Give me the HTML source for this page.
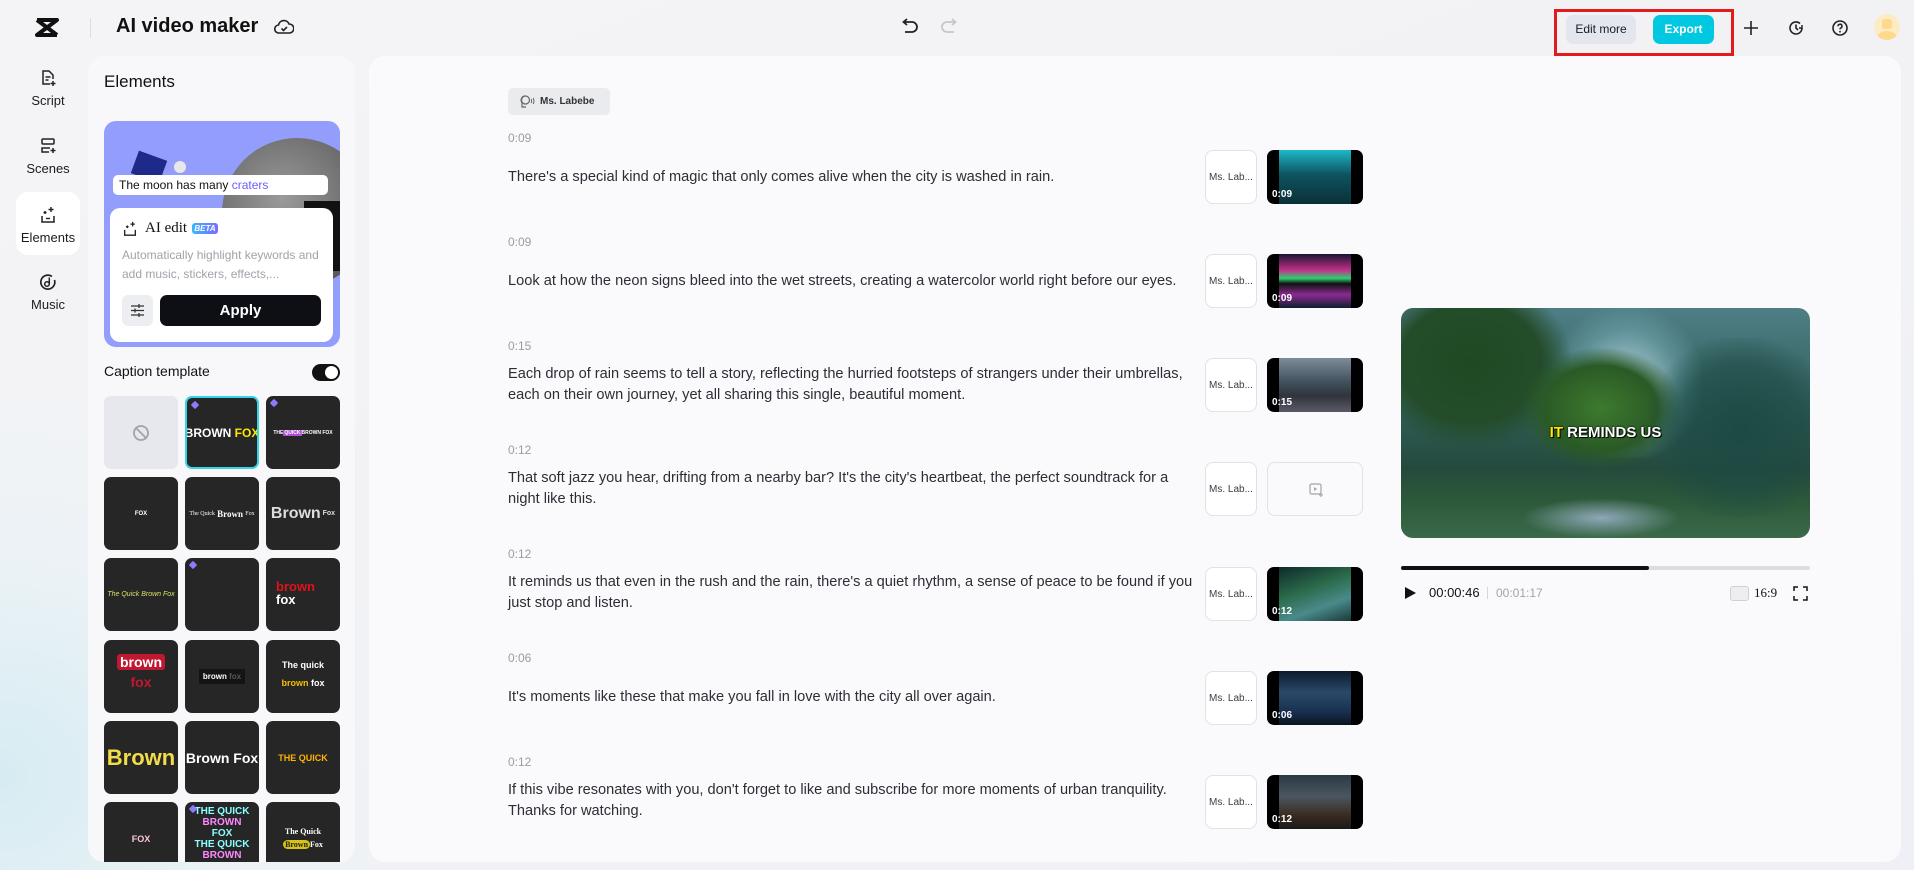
<!DOCTYPE html>
<html><head><meta charset="utf-8"><style>
*{box-sizing:border-box;margin:0;padding:0}
body{width:1914px;height:870px;overflow:hidden;font-family:"Liberation Sans",sans-serif;color:#1a1c22;background:linear-gradient(160deg,#f4f4f6 0%,#f2f2f5 50%,#eef0f6 100%);position:relative}
.bgtint{position:absolute;left:0;top:400px;width:400px;height:470px;background:radial-gradient(ellipse at 0% 80%,#d6ecf2 0%,rgba(230,242,246,0.6) 40%,rgba(244,244,246,0) 75%)}
.abs{position:absolute}
.nav{position:absolute;left:16px;width:64px;text-align:center;font-size:13px;color:#1a1c22}
.nav svg{display:block;margin:0 auto 6px}
.panel{position:absolute;left:88px;top:56px;width:267px;height:806px;background:#f8f8fb;border-radius:16px;overflow:hidden}
.main{position:absolute;left:369px;top:56px;width:1532px;height:806px;background:#fafafc;border-radius:16px}
.ts{position:absolute;left:508px;font-size:12px;color:#9a9ca4}
.tx{position:absolute;left:508px;width:692px;font-size:14.6px;line-height:21px;color:#2b2e36}
.vb{position:absolute;left:1205px;width:52px;height:54px;border:1px solid #dfe2e6;border-radius:8px;background:#fff;font-size:10px;color:#3a3d45;display:flex;align-items:center;justify-content:center}
.th{position:absolute;left:1267px;width:96px;height:54px;border-radius:7px;background:#000;overflow:hidden}
.th .im{position:absolute;left:12px;right:12px;top:0;bottom:0}
.th span{position:absolute;left:5px;bottom:4px;color:#fff;font-size:10px;font-weight:bold}
.cell{position:absolute;width:74px;height:73px;background:#262626;border-radius:7px;overflow:hidden;display:flex;align-items:center;justify-content:center;color:#fff;font-weight:bold;text-align:center}
.gem{position:absolute;left:5px;top:4px;width:6px;height:6px;background:#8a7cff;transform:rotate(45deg);border-radius:1px}
</style></head><body>
<div class="bgtint"></div>

<svg class="abs" style="left:35px;top:17px" width="24" height="21" viewBox="0 0 24 21"><path d="M2 3h20L2 18h20" fill="none" stroke="#111" stroke-width="4" stroke-linejoin="round"/><path d="M2 3l20 15" stroke="#111" stroke-width="4"/></svg>
<div class="abs" style="left:90px;top:18px;width:1px;height:20px;background:#dcdde2"></div>
<div class="abs" style="left:116px;top:15px;font-size:20px;font-weight:bold;color:#111">AI video maker</div>
<svg class="abs" style="left:274px;top:17px" width="20" height="20" viewBox="0 0 20 20"><path d="M5 16a4 4 0 0 1-.5-8A5.5 5.5 0 0 1 15 7a4.5 4.5 0 0 1 .5 9z" fill="none" stroke="#222" stroke-width="1.6"/><path d="M7.5 11.5l2 2 3.5-3.5" fill="none" stroke="#222" stroke-width="1.6"/></svg>
<svg class="abs" style="left:899px;top:18px" width="20" height="18" viewBox="0 0 20 18"><path d="M5 4h8a5 5 0 0 1 0 10H6" fill="none" stroke="#222" stroke-width="1.8"/><path d="M8 1L4.5 4 8 7" fill="none" stroke="#222" stroke-width="1.8"/></svg>
<svg class="abs" style="left:940px;top:18px" width="20" height="18" viewBox="0 0 20 18"><path d="M15 4H7a5 5 0 0 0 0 10h7" fill="none" stroke="#c4c6cc" stroke-width="1.8"/><path d="M12 1l3.5 3L12 7" fill="none" stroke="#c4c6cc" stroke-width="1.8"/></svg>

<div class="abs" style="left:1554px;top:9px;width:180px;height:47px;border:3px solid #e21c1c"></div>
<div class="abs" style="left:1566px;top:15px;width:70px;height:29px;border-radius:7px;background:#e3e6ed;font-size:12px;color:#1a1c22;text-align:center;line-height:29px">Edit more</div>
<div class="abs" style="left:1653px;top:15px;width:61px;height:29px;border-radius:7px;background:#00c8e0;font-size:12px;font-weight:bold;color:#fff;text-align:center;line-height:29px">Export</div>
<svg class="abs" style="left:1743px;top:20px" width="16" height="16"><path d="M8 1v14M1 8h14" stroke="#222" stroke-width="1.6"/></svg>
<svg class="abs" style="left:1787px;top:19px" width="18" height="18" viewBox="0 0 18 18"><path d="M15 9a6 6 0 1 1-2-4.5" fill="none" stroke="#222" stroke-width="1.6"/><path d="M9 5.5V9l2 2" fill="none" stroke="#222" stroke-width="1.6"/><path d="M15 6v3h-3" fill="none" stroke="#222" stroke-width="1.4"/></svg>
<svg class="abs" style="left:1831px;top:19px" width="18" height="18" viewBox="0 0 18 18"><circle cx="9" cy="9" r="7" fill="none" stroke="#222" stroke-width="1.6"/><path d="M7 7.2a2 2 0 1 1 2.6 1.9c-.5.2-.6.6-.6 1.3" fill="none" stroke="#222" stroke-width="1.5"/><circle cx="9" cy="12.7" r=".9" fill="#222"/></svg>
<div class="abs" style="left:1874px;top:14px;width:26px;height:26px;border-radius:50%;background:#fdebc4;overflow:hidden"><div style="position:absolute;left:8px;top:5px;width:10px;height:10px;background:#fcd98c;border-radius:3px"></div><div style="position:absolute;left:3px;top:17px;width:20px;height:14px;background:#fcd98c;border-radius:50%"></div></div>

<div class="abs" style="left:16px;top:192px;width:64px;height:63px;background:#fff;border-radius:12px"></div>
<div class="nav" style="top:69px"><svg width="18" height="18" viewBox="0 0 18 18"><path d="M11 15H4V2h6l4 4v4" fill="none" stroke="#222" stroke-width="1.5"/><path d="M6.5 8h5M6.5 11h3" stroke="#222" stroke-width="1.4"/><path d="M14 12v5M11.5 14.5h5" stroke="#222" stroke-width="1.5"/></svg>Script</div>
<div class="nav" style="top:137px"><svg width="18" height="18" viewBox="0 0 18 18"><rect x="3" y="2" width="12" height="5" rx="1" fill="none" stroke="#222" stroke-width="1.5"/><path d="M11 11H3v4h7" fill="none" stroke="#222" stroke-width="1.5"/><path d="M14 11v5M11.5 13.5h5" stroke="#222" stroke-width="1.5"/></svg>Scenes</div>
<div class="nav" style="top:206px"><svg width="18" height="18" viewBox="0 0 18 18"><path d="M3 10v6h12v-6" fill="none" stroke="#222" stroke-width="1.5"/><path d="M12 1v5M9.5 3.5h5M6 5v3M4.5 6.5h3" stroke="#222" stroke-width="1.4"/><path d="M7 12.5h4" stroke="#222" stroke-width="1.4"/></svg>Elements</div>
<div class="nav" style="top:273px"><svg width="18" height="18" viewBox="0 0 18 18"><path d="M13 3.5A7 7 0 1 0 15.5 7" fill="none" stroke="#222" stroke-width="1.7"/><circle cx="8" cy="11" r="2.3" fill="none" stroke="#222" stroke-width="1.5"/><path d="M10.3 11V4.5" stroke="#222" stroke-width="1.5"/></svg>Music</div>

<div class="panel">
 <div class="abs" style="left:16px;top:16px;font-size:17px;color:#111">Elements</div>
 <div class="abs" style="left:16px;top:84px;width:236px;height:1px;background:#e2e3e8"></div>
 <div class="abs" style="left:16px;top:65px;width:236px;height:226px;background:#939dfc;border-radius:12px;overflow:hidden">
  <div class="abs" style="left:118px;top:17px;width:150px;height:150px;border-radius:50%;background:radial-gradient(circle at 40% 40%,#9a9a9a,#6a6a6a 60%,#3a3a3a)"></div>
  <div class="abs" style="left:200px;top:80px;width:40px;height:70px;background:#111"></div>
  <div class="abs" style="left:30px;top:34px;width:30px;height:24px;background:#1d2a8a;transform:rotate(20deg)"></div>
  <div class="abs" style="left:70px;top:40px;width:12px;height:12px;border-radius:50%;background:#e8e8e8"></div>
  <div class="abs" style="left:9px;top:54px;width:215px;height:20px;background:#fff;border-radius:5px;font-size:12px;line-height:20px;padding-left:6px;color:#111">The moon has many <span style="color:#6a5cff">craters</span></div>
  <div class="abs" style="left:6px;top:87px;width:223px;height:134px;background:#fff;border-radius:10px">
   <svg class="abs" style="left:12px;top:13px" width="16" height="16" viewBox="0 0 18 18"><path d="M3 10v6h12v-6" fill="none" stroke="#222" stroke-width="1.5"/><path d="M12 1v5M9.5 3.5h5M6 5v3M4.5 6.5h3" stroke="#222" stroke-width="1.4"/></svg>
   <div class="abs" style="left:35px;top:12px;font-family:'Liberation Serif',serif;font-size:15px;color:#111">AI edit</div>
   <div class="abs" style="left:82px;top:15px;width:26px;height:11px;border-radius:3px;background:linear-gradient(90deg,#3bb6ff,#7a6bff);color:#fff;font-size:8px;font-style:italic;font-weight:bold;text-align:center;line-height:11px">BETA</div>
   <div class="abs" style="left:12px;top:38px;font-size:12px;line-height:19px;color:#a0a3aa;width:200px">Automatically highlight keywords and add music, stickers, effects,...</div>
   <div class="abs" style="left:12px;top:87px;width:31px;height:31px;background:#eceef1;border-radius:6px"><svg style="position:absolute;left:8px;top:8px" width="15" height="15" viewBox="0 0 15 15"><path d="M1 3h13M1 7.5h13M1 12h13" stroke="#333" stroke-width="1.3"/><path d="M9 1v4M5 5.5v4M9 10v4" stroke="#333" stroke-width="1.3"/></svg></div>
   <div class="abs" style="left:50px;top:87px;width:161px;height:31px;background:#0d0f14;border-radius:7px;color:#fff;font-size:15px;font-weight:bold;text-align:center;line-height:31px">Apply</div>
  </div>
 </div>
 <div class="abs" style="left:16px;top:307px;font-size:14px;color:#111">Caption template</div>
 <div class="abs" style="left:224px;top:308px;width:28px;height:17px;border-radius:9px;background:#111"><div style="position:absolute;right:2px;top:2px;width:13px;height:13px;border-radius:50%;background:#fff"></div></div>

 <div class="cell" style="left:16px;top:340px;background:#e6e8ee"><svg width="18" height="18"><circle cx="9" cy="9" r="7" fill="none" stroke="#9ea3ad" stroke-width="1.8"/><path d="M4 4l10 10" stroke="#9ea3ad" stroke-width="1.8"/></svg></div>
 <div class="cell" style="left:97px;top:340px;border:2px solid #33d4e6;font-size:12px"><i class="gem"></i>BROWN&nbsp;<span style="color:#ffe600">FOX</span></div>
 <div class="cell" style="left:178px;top:340px;font-size:5px"><i class="gem"></i>THE <span style="background:#b04fd6;padding:0 1px">QUICK</span> BROWN FOX</div>

 <div class="cell" style="left:16px;top:421px;font-size:6px">FOX</div>
 <div class="cell" style="left:97px;top:421px;font-size:6px;font-family:'Liberation Serif',serif;font-weight:normal">The Quick <b style="font-size:9px">&nbsp;Brown&nbsp;</b> Fox</div>
 <div class="cell" style="left:178px;top:421px;font-size:16px;color:#ddd">Brown<span style="font-size:7px">&nbsp;Fox</span></div>

 <div class="cell" style="left:16px;top:502px;font-size:7px;color:#d9e06a;font-style:italic;font-weight:normal">The Quick Brown Fox</div>
 <div class="cell" style="left:97px;top:502px"><i class="gem"></i></div>
 <div class="cell" style="left:178px;top:502px;font-size:13px;line-height:13px;text-align:left;display:block;padding:22px 0 0 10px"><span style="color:#e0121a">brown</span><br>fox</div>

 <div class="cell" style="left:16px;top:584px;font-size:14px;line-height:20px;display:block;padding-top:12px"><span style="background:#c01830;padding:0 3px;border-radius:3px">brown</span><br><span style="color:#c01830">fox</span></div>
 <div class="cell" style="left:97px;top:584px;font-size:8px"><span style="background:#141414;padding:3px 4px">brown <span style="color:#555">fox</span></span></div>
 <div class="cell" style="left:178px;top:584px;font-size:9px;line-height:18px;display:block;padding-top:16px">The quick<br><span style="color:#f2c100">brown</span> fox</div>

 <div class="cell" style="left:16px;top:665px;font-size:22px;color:#f3dc49;font-family:'Liberation Sans Narrow','Liberation Sans',sans-serif">Brown</div>
 <div class="cell" style="left:97px;top:665px;font-size:14px;font-family:'Liberation Sans Narrow','Liberation Sans',sans-serif">Brown Fox</div>
 <div class="cell" style="left:178px;top:665px;font-size:9px;color:#ffb400">THE QUICK</div>

 <div class="cell" style="left:16px;top:746px;font-size:9px;color:#ffc8d8">FOX</div>
 <div class="cell" style="left:97px;top:746px;font-size:10px;line-height:11px;display:block;padding-top:4px"><i class="gem"></i><span style="color:#8ff">THE QUICK</span><br><span style="color:#f8f">BROWN</span><br><span style="color:#8ff">FOX</span><br><span style="color:#8ff">THE QUICK</span><br><span style="color:#f8f">BROWN</span></div>
 <div class="cell" style="left:178px;top:746px;font-size:8px;line-height:13px;font-family:'Liberation Serif',serif;display:block;padding-top:23px">The Quick<br><span style="background:#d7c21a;color:#222;border-radius:5px;padding:0 2px">Brown</span>Fox</div>
</div>

<div class="main"></div>
<div class="abs" style="left:508px;top:88px;width:102px;height:27px;background:#e9ebee;border-radius:5px;font-size:10px;font-weight:bold;color:#333;line-height:27px;padding-left:32px">Ms. Labebe</div>
<svg class="abs" style="left:519px;top:94px" width="16" height="16" viewBox="0 0 16 16"><path d="M6 2a4 4 0 0 0-3 6.5V13h4" fill="none" stroke="#666" stroke-width="1.2"/><circle cx="6.5" cy="6" r="4" fill="none" stroke="#666" stroke-width="1.2"/><path d="M12 5c.8 1 .8 3 0 4M14 4c1.3 1.5 1.3 4.5 0 6" fill="none" stroke="#666" stroke-width="1"/></svg>

<div class="ts" style="top:131px">0:09</div>
<div class="tx" style="top:167px">There's a special kind of magic that only comes alive when the city is washed in rain.</div>
<div class="ts" style="top:235px">0:09</div>
<div class="tx" style="top:271px">Look at how the neon signs bleed into the wet streets, creating a watercolor world right before our eyes.</div>
<div class="ts" style="top:339px">0:15</div>
<div class="tx" style="top:364px">Each drop of rain seems to tell a story, reflecting the hurried footsteps of strangers under their umbrellas, each on their own journey, yet all sharing this single, beautiful moment.</div>
<div class="ts" style="top:443px">0:12</div>
<div class="tx" style="top:468px">That soft jazz you hear, drifting from a nearby bar? It's the city's heartbeat, the perfect soundtrack for a night like this.</div>
<div class="ts" style="top:547px">0:12</div>
<div class="tx" style="top:572px">It reminds us that even in the rush and the rain, there's a quiet rhythm, a sense of peace to be found if you just stop and listen.</div>
<div class="ts" style="top:651px">0:06</div>
<div class="tx" style="top:687px">It's moments like these that make you fall in love with the city all over again.</div>
<div class="ts" style="top:755px">0:12</div>
<div class="tx" style="top:780px">If this vibe resonates with you, don't forget to like and subscribe for more moments of urban tranquility. Thanks for watching.</div>

<div class="vb" style="top:150px">Ms. Lab...</div>
<div class="th" style="top:150px"><div class="im" style="background:linear-gradient(180deg,#1fb8c8 0%,#0d5460 45%,#0b3038 100%)"></div><span>0:09</span></div>
<div class="vb" style="top:254px">Ms. Lab...</div>
<div class="th" style="top:254px"><div class="im" style="background:linear-gradient(180deg,#1a1530 0%,#c0308a 30%,#2fd070 45%,#111 55%,#8a2a90 75%,#102030 100%)"></div><span>0:09</span></div>
<div class="vb" style="top:358px">Ms. Lab...</div>
<div class="th" style="top:358px"><div class="im" style="background:linear-gradient(180deg,#7c8c98 0%,#40505c 45%,#30343c 70%,#5a5a66 100%)"></div><span>0:15</span></div>
<div class="vb" style="top:462px">Ms. Lab...</div>
<div class="abs" style="left:1267px;top:462px;width:96px;height:54px;border:1px solid #dfe2e6;border-radius:8px;background:#fafafc"><svg style="position:absolute;left:41px;top:20px" width="14" height="14" viewBox="0 0 14 14"><rect x="1" y="1" width="11" height="10" rx="1.5" fill="none" stroke="#a0a4ac" stroke-width="1.2"/><path d="M5 4l3 2-3 2z" fill="#a0a4ac"/><path d="M12 10v4M10 12h4" stroke="#a0a4ac" stroke-width="1.1"/></svg></div>
<div class="vb" style="top:567px">Ms. Lab...</div>
<div class="th" style="top:567px"><div class="im" style="background:linear-gradient(160deg,#0e2a2a 0%,#2a6a4a 40%,#4a8a8a 70%,#1a3a3a 100%)"></div><span>0:12</span></div>
<div class="vb" style="top:671px">Ms. Lab...</div>
<div class="th" style="top:671px"><div class="im" style="background:linear-gradient(180deg,#0c1a2c 0%,#2a4a6a 40%,#1a3050 75%,#0a1420 100%)"></div><span>0:06</span></div>
<div class="vb" style="top:775px">Ms. Lab...</div>
<div class="th" style="top:775px"><div class="im" style="background:linear-gradient(180deg,#2a3a44 0%,#4a5660 40%,#3a2a20 75%,#1a1a1a 100%)"></div><span>0:12</span></div>

<div class="abs" style="left:1401px;top:308px;width:409px;height:230px;border-radius:12px;overflow:hidden;background:linear-gradient(180deg,#4f7f86 0%,#2f5d58 45%,#254a3c 70%,#2d5a3a 85%,#3a6a4a 100%)">
 <div class="abs" style="left:150px;top:0;width:150px;height:150px;background:radial-gradient(ellipse,#b8d6e0 0%,rgba(120,170,180,0.5) 50%,rgba(0,0,0,0) 75%)"></div>
 <div class="abs" style="left:-30px;top:-30px;width:200px;height:170px;background:radial-gradient(ellipse,#1e4a22 0%,#244c2a 50%,rgba(0,0,0,0) 72%)"></div>
 <div class="abs" style="left:120px;top:40px;width:160px;height:120px;background:radial-gradient(ellipse,#3d7a2e 0%,#2a5a26 50%,rgba(0,0,0,0) 72%)"></div>
 <div class="abs" style="left:250px;top:30px;width:180px;height:180px;background:radial-gradient(ellipse,#1c4a44 0%,rgba(28,74,68,0.6) 50%,rgba(0,0,0,0) 75%)"></div>
 <div class="abs" style="left:120px;top:190px;width:160px;height:40px;background:radial-gradient(ellipse,#8ea8b8 0%,rgba(0,0,0,0) 70%)"></div>
 <div class="abs" style="left:0;right:0;top:116px;text-align:center;font-size:15px;font-weight:bold;color:#fff;text-shadow:0 0 2px #000,1px 1px 0 #000"><span style="color:#ffe600">IT</span> REMINDS US</div>
</div>
<div class="abs" style="left:1401px;top:566px;width:409px;height:4px;background:#dcdde0;border-radius:2px"></div>
<div class="abs" style="left:1401px;top:566px;width:248px;height:4px;background:#111;border-radius:2px"></div>
<svg class="abs" style="left:1404px;top:586px" width="13" height="14"><path d="M1 1l11 6-11 6z" fill="#111"/></svg>
<div class="abs" style="left:1429px;top:585px;font-size:13px;color:#111">00:00:46</div>
<div class="abs" style="left:1487px;top:587px;width:1px;height:12px;background:#d6d7da"></div>
<div class="abs" style="left:1496px;top:586px;font-size:12px;color:#a0a3aa">00:01:17</div>
<div class="abs" style="left:1730px;top:586px;width:19px;height:15px;border:1px solid #cfd1d6;border-radius:3px;background:#eceef1"></div>
<div class="abs" style="left:1754px;top:585px;font-size:13px;color:#111;font-family:'Liberation Serif',serif">16:9</div>
<svg class="abs" style="left:1793px;top:586px" width="15" height="15" viewBox="0 0 15 15"><path d="M1 5V1h4M10 1h4v4M14 10v4h-4M5 14H1v-4" fill="none" stroke="#111" stroke-width="1.5"/></svg>
</body></html>
